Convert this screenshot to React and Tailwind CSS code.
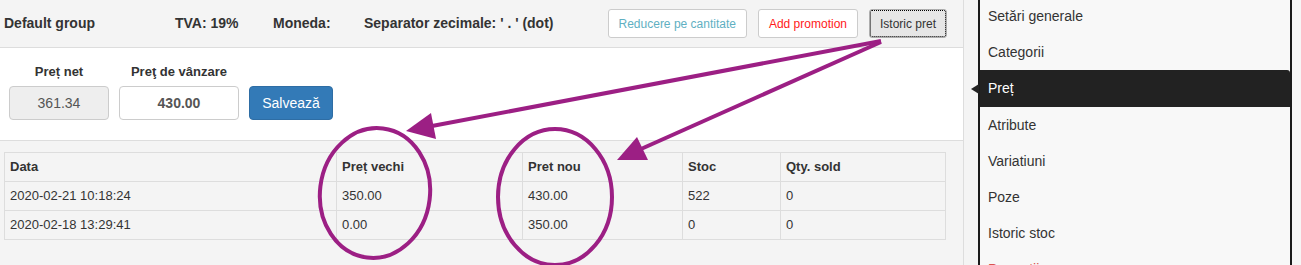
import React from 'react';

const rows = [
  { date: '2020-02-21 10:18:24', oldPrice: '350.00', newPrice: '430.00', stock: '522', sold: '0' },
  { date: '2020-02-18 13:29:41', oldPrice: '0.00', newPrice: '350.00', stock: '0', sold: '0' },
];

const menu = ['Setări generale', 'Categorii', 'Preț', 'Atribute', 'Variatiuni', 'Poze', 'Istoric stoc'];

const Annotations = () => (
  <svg className="absolute inset-0 pointer-events-none" width="1301" height="265" viewBox="0 0 1301 265">
    <g stroke="#9c1f84" strokeWidth="4" fill="none">
      <line x1="881" y1="41" x2="432" y2="126" />
      <line x1="881" y1="42" x2="641" y2="149" />
      <ellipse cx="375" cy="193" rx="55" ry="65" transform="rotate(7 375 193)" />
      <ellipse cx="555" cy="197" rx="57" ry="68" />
    </g>
    <g fill="#9c1f84">
      <polygon points="406,131 431,113 436,139" />
      <polygon points="617,160 637,137 648,160" />
    </g>
  </svg>
);

export default function App() {
  return (
    <div className="relative w-[1301px] h-[265px] overflow-hidden bg-[#f6f6f6] text-[#333] font-['Liberation_Sans',Arial,sans-serif] flex">
      <div className="w-[964px] shrink-0 border-r border-[#ddd] bg-[#f4f4f4] flex flex-col">
        <div className="h-[48px] border-b border-[#ddd] flex items-center pl-1 pr-[16px] text-[14px] font-bold">
          <span className="w-[171px]">Default group</span>
          <span className="w-[98px]">TVA: 19%</span>
          <span className="w-[91px]">Moneda:</span>
          <span>Separator zecimale: ' . ' (dot)</span>
          <div className="ml-auto flex gap-[11px] font-normal text-[12px]">
            <button className="h-[29px] px-[10px] rounded-[3px] border border-[#ccc] bg-white text-[#5fb0c2]">Reducere pe cantitate</button>
            <button className="h-[29px] px-[10px] rounded-[3px] border border-[#ccc] bg-white text-[#ff1a1a]">Add promotion</button>
            <button className="h-[29px] px-[10px] rounded-[3px] border border-[#adadad] bg-[#e6e6e6] text-[#333] outline-1 outline-dotted outline-black -outline-offset-2">Istoric pret</button>
          </div>
        </div>
        <div className="h-[93px] bg-white border-b border-[#ddd] pl-[9px] pt-[15px] flex items-end pb-[20px] gap-[10px]">
          <div className="flex flex-col items-center w-[100px]">
            <label className="text-[13px] font-bold leading-[18px] mb-[5px]">Preț net</label>
            <div className="w-full h-[34px] rounded-[4px] border border-[#ccc] bg-[#eee] text-[14px] text-[#555] flex items-center justify-center">361.34</div>
          </div>
          <div className="flex flex-col items-center w-[120px]">
            <label className="text-[13px] font-bold leading-[18px] mb-[5px]">Preţ de vânzare</label>
            <div className="w-full h-[34px] rounded-[4px] border border-[#ccc] bg-white text-[14px] font-bold text-[#555] flex items-center justify-center">430.00</div>
          </div>
          <button className="w-[84px] h-[34px] rounded-[4px] bg-[#337ab7] border border-[#2e6da4] text-white text-[14px]">Salvează</button>
        </div>
        <div className="pt-[11px] pl-1">
          <table className="border-collapse text-[13px] leading-[18px] w-[942px]">
            <thead>
              <tr className="font-bold">
                <td className="border border-[#ddd] px-[5px] h-[29px] w-[332px]">Data</td>
                <td className="border border-[#ddd] px-[5px] w-[186px]">Preț vechi</td>
                <td className="border border-[#ddd] px-[5px] w-[160px]">Pret nou</td>
                <td className="border border-[#ddd] px-[5px] w-[98px]">Stoc</td>
                <td className="border border-[#ddd] px-[5px]">Qty. sold</td>
              </tr>
            </thead>
            <tbody>
              {rows.map((r) => (
                <tr key={r.date}>
                  <td className="border border-[#ddd] px-[5px] h-[29px]">{r.date}</td>
                  <td className="border border-[#ddd] px-[5px]">{r.oldPrice}</td>
                  <td className="border border-[#ddd] px-[5px]">{r.newPrice}</td>
                  <td className="border border-[#ddd] px-[5px]">{r.stock}</td>
                  <td className="border border-[#ddd] px-[5px]">{r.sold}</td>
                </tr>
              ))}
            </tbody>
          </table>
        </div>
      </div>
      <div className="w-[14px] shrink-0 bg-[#f4f4f4]" />
      <div className="w-[314px] shrink-0 border-x-2 border-[#1a1a1a] bg-[#f8f8f8] text-[14px]">
        <ul className="-mt-[2px]">
          {menu.map((item) =>
            item === 'Preț' ? (
              <li key={item} className="relative h-[37px] flex items-center pl-2 bg-[#222] text-white rounded-tr-[3px]">
                <span className="absolute -left-[9px] top-[14px] w-0 h-0 border-y-[5px] border-y-transparent border-r-[8px] border-r-[#222]" />
                {item}
              </li>
            ) : (
              <li key={item} className="h-[36px] flex items-center pl-2">{item}</li>
            )
          )}
          <li className="h-[36px] flex items-center pl-2 text-[#d9534f]">Promoții</li>
        </ul>
      </div>
      <Annotations />
    </div>
  );
}
